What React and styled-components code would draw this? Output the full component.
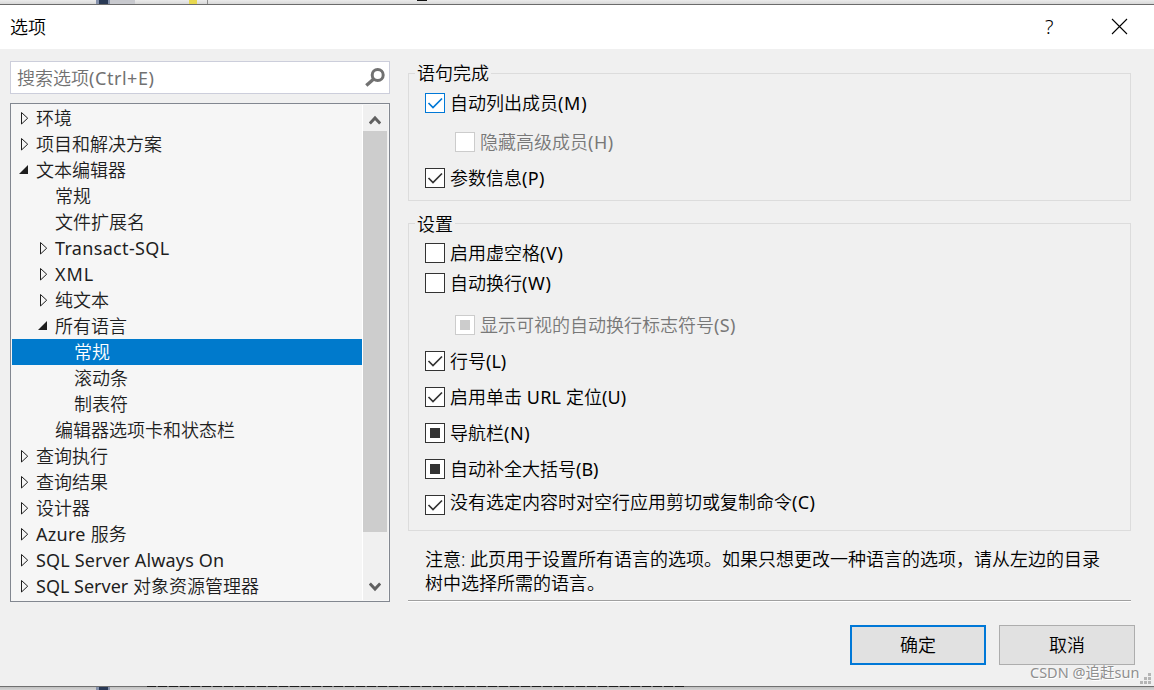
import React from "react";
import styled, { createGlobalStyle, css } from "styled-components";

const GlobalStyle = createGlobalStyle`
  * {
    box-sizing: border-box;
  }
  body {
    margin: 0;
    overflow: hidden;
    background: #e3e3e3;
    font-family: "Noto Sans", "Noto Sans CJK SC", sans-serif;
    font-size: 18px;
    font-weight: 350;
    color: #000;
  }
`;

const Screen = styled.div`
  width: 1154px;
  height: 690px;
  display: flex;
  flex-direction: column;
`;

const TopStrip = styled.div`
  height: 4px;
  display: flex;
  padding-left: 96px;
  background: linear-gradient(#ebebeb, #d8d8d8);
`;

const BottomStrip = styled.div`
  height: 3px;
  display: flex;
  padding-left: 96px;
  background: linear-gradient(#c0c0c0, #d4d4d4);
`;

const Block = styled.span`
  width: ${(p) => p.$w}px;
  height: ${(p) => (p.$h ? `${p.$h}px` : "auto")};
  margin-left: ${(p) => p.$gap || 0}px;
  background: ${(p) => p.$color};
`;

const Dashes = styled.span`
  width: 537px;
  height: 1px;
  margin: -1px 0 0 37px;
  background: repeating-linear-gradient(
    90deg,
    #1c1c1c 0 9px,
    #777 9px 11px
  );
`;

const Dialog = styled.div`
  height: 683px;
  display: flex;
  flex-direction: column;
  background: #f0f0f0;
  border-top: 1px solid #6b6b6b;
  border-bottom: 1px solid #707070;
`;

const TitleBar = styled.div`
  height: 44px;
  display: flex;
  align-items: center;
  background: #fff;
  padding: 0 26px 1px 10px;
  line-height: 24px;
  .title {
    flex: 1;
  }
  svg {
    display: block;
  }
  .help {
    width: 9px;
    margin-right: 57px;
    font-size: 20px;
  }
`;

const Content = styled.div`
  height: 553px;
  display: flex;
  gap: 18px;
  padding: 12px 23px 0 10px;
`;

const Sidebar = styled.div`
  width: 380px;
  display: flex;
  flex-direction: column;
  gap: 9px;
`;

const SearchBox = styled.div`
  height: 33px;
  display: flex;
  align-items: center;
  justify-content: space-between;
  padding: 0 3px 0 6px;
  border: 1px solid #cccedb;
  background: #fff;
  color: #717171;
  line-height: 24px;
`;

const Tree = styled.div`
  height: 499px;
  display: flex;
  padding: 1px;
  border: 1px solid #828790;
  background: #f6f6f6;
`;

const TreeList = styled.div`
  width: 350px;
`;

const TreeItem = styled.div`
  height: 26px;
  display: flex;
  align-items: center;
  padding-left: ${(p) => 6 + p.$level * 19}px;
  color: ${(p) => (p.$selected ? "#fff" : "#1e1e1e")};
  background: ${(p) => (p.$selected ? "#007acc" : "transparent")};
  line-height: 26px;
  white-space: pre;
  svg {
    width: 12px;
    height: 14px;
    margin-right: 6px;
  }
`;

const Latin = styled.span`
  font-weight: 400;
  letter-spacing: ${(p) => p.$spacing}px;
`;

const ScrollBar = styled.div`
  width: 26px;
  display: flex;
  flex-direction: column;
  align-items: center;
  background: #f0f0f0;
  border-left: 1px solid #fff;
  padding-right: 1px;
  .thumb {
    flex: none;
    width: 24px;
    height: 401px;
    margin-bottom: 42px;
    background: #cdcdcd;
  }
`;

const ScrollButton = styled.div`
  flex: none;
  height: 26px;
  display: flex;
  align-items: center;
  padding-top: ${(p) => p.$shift || 0}px;
`;

const Page = styled.div`
  width: 723px;
  display: flex;
  flex-direction: column;
  padding-top: 12px;
`;

const Group = styled.div`
  flex: none;
  height: ${(p) => p.$height}px;
  margin-bottom: ${(p) => p.$after}px;
  padding: 0 16px;
  border: 1px solid #dcdcdc;
`;

const Legend = styled.div`
  width: max-content;
  height: 24px;
  margin: -13px 0 8px -10px;
  padding: ${(p) => p.$drop || 0}px 2px 0;
  background: #f0f0f0;
  line-height: 24px;
`;

const Option = styled.div`
  height: 20px;
  display: flex;
  align-items: center;
  gap: 5px;
  margin-top: ${(p) => p.$top || 0}px;
  margin-left: ${(p) => (p.$nested ? 30 : 0)}px;
  color: ${(p) => (p.$disabled ? "#787878" : "#000")};
  line-height: 20px;
  white-space: pre;
  .label {
    padding-bottom: ${(p) => p.$lift || 0}px;
  }
`;

const Box = styled.div`
  width: 20px;
  height: 20px;
  display: flex;
  align-items: center;
  justify-content: center;
  border: 1px solid ${(p) => p.$color};
  background: #fff;
  color: ${(p) => p.$color};
  ${(p) =>
    p.$state === "mixed" &&
    css`
      &::after {
        content: "";
        width: 10px;
        height: 10px;
        background: ${p.$color};
      }
    `}
`;

const Note = styled.div`
  height: 53px;
  padding-left: 17px;
  line-height: 24px;
  white-space: nowrap;
`;

const Divider = styled.div`
  height: 2px;
  background: #fff;
  border-top: 1px solid #a0a0a0;
`;

const Footer = styled.div`
  display: flex;
  justify-content: flex-end;
  gap: 13px;
  padding: 23px 19px 0 0;
`;

const Button = styled.div`
  width: 136px;
  height: 40px;
  display: flex;
  align-items: center;
  justify-content: center;
  padding-bottom: 2px;
  background: #e1e1e1;
  border: ${(p) => (p.$primary ? "2px solid #0078d7" : "1px solid #adadad")};
`;

const Watermark = styled.div`
  position: absolute;
  left: 1030px;
  top: 662px;
  font-size: 14.5px;
  font-weight: 400;
  line-height: 20px;
  color: #8f8f8f;
  text-shadow: 1px 1px 0 #fff;
  white-space: nowrap;
`;

const Grip = styled.svg`
  position: absolute;
  left: 1140px;
  top: 673px;
`;

const tree = [
  { text: "环境", level: 0, state: "closed" },
  { text: "项目和解决方案", level: 0, state: "closed" },
  { text: "文本编辑器", level: 0, state: "open" },
  { text: "常规", level: 1 },
  { text: "文件扩展名", level: 1 },
  { text: "Transact-SQL", level: 1, state: "closed", spacing: 0.33 },
  { text: "XML", level: 1, state: "closed", spacing: 0.9 },
  { text: "纯文本", level: 1, state: "closed" },
  { text: "所有语言", level: 1, state: "open" },
  { text: "常规", level: 2, selected: true },
  { text: "滚动条", level: 2 },
  { text: "制表符", level: 2 },
  { text: "编辑器选项卡和状态栏", level: 1 },
  { text: "查询执行", level: 0, state: "closed" },
  { text: "查询结果", level: 0, state: "closed" },
  { text: "设计器", level: 0, state: "closed" },
  { text: "Azure 服务", level: 0, state: "closed", spacing: 0.3 },
  { text: "SQL Server Always On", level: 0, state: "closed", spacing: 0.17 },
  { text: "SQL Server 对象资源管理器", level: 0, state: "closed" },
];

const completion = [
  { text: "自动列出成员(M)", state: "checked", active: true, spacing: 0.7 },
  {
    text: "隐藏高级成员(H)",
    top: 19,
    nested: true,
    disabled: true,
    spacing: 0.5,
  },
  { text: "参数信息(P)", top: 16, state: "checked", spacing: 0.4 },
];

const settings = [
  { text: "启用虚空格(V)", spacing: 0.7 },
  { text: "自动换行(W)", top: 10, spacing: 0.7 },
  {
    text: "显示可视的自动换行标志符号(S)",
    top: 22,
    state: "mixed",
    nested: true,
    disabled: true,
    spacing: 0.3,
  },
  { text: "行号(L)", top: 16, state: "checked" },
  { text: "启用单击 URL 定位(U)", top: 16, state: "checked", spacing: 0.15 },
  { text: "导航栏(N)", top: 16, state: "mixed", spacing: 0.6 },
  { text: "自动补全大括号(B)", top: 16, state: "mixed" },
  {
    text: "没有选定内容时对空行应用剪切或复制命令(C)",
    top: 16,
    state: "checked",
    lift: 6,
    spacing: 0.4,
  },
];

// only the latin runs are spaced, the chinese ones keep the 18px advance
const Label = ({ text, spacing = 0 }) => (
  <span className="label">
    {text.split(/([\x20-\x7e]+)/).map((part, index) =>
      index % 2 ? (
        <Latin key={index} $spacing={spacing}>
          {part}
        </Latin>
      ) : (
        part
      )
    )}
  </span>
);

const Arrow = ({ state }) => (
  <svg viewBox="0 0 12 14">
    {state === "closed" && (
      <path d="M3.5 1.5V13L9.7 7.2Z" fill="none" stroke="#1e1e1e" />
    )}
    {state === "open" && <path d="M10 2V11H1Z" fill="#1e1e1e" />}
  </svg>
);

const Chevron = ({ down }) => (
  <svg width="12" height="10" viewBox="0 0 12 10">
    <path
      d={down ? "M0.8 1.5L6 7L11.2 1.5" : "M0.8 8.5L6 3L11.2 8.5"}
      fill="none"
      stroke="#606060"
      strokeWidth="3"
    />
  </svg>
);

const CheckOption = ({ item }) => {
  let color = "#333";
  if (item.disabled) color = "#ccc";
  if (item.active) color = "#0078d7";
  return (
    <Option
      $top={item.top}
      $nested={item.nested}
      $disabled={item.disabled}
      $lift={item.lift}
    >
      <Box $color={color} $state={item.state}>
        {item.state === "checked" && (
          <svg width="18" height="18" viewBox="0 0 18 18">
            <path
              d="M2.5 9L7 13.5L16 4.5"
              fill="none"
              stroke="currentColor"
              strokeWidth="1.7"
            />
          </svg>
        )}
      </Box>
      <Label text={item.text} spacing={item.spacing} />
    </Option>
  );
};

const App = () => {
  return (
    <Screen>
      <GlobalStyle />
      <TopStrip>
        <Block $w={3} $color="#8591ab" />
        <Block $w={9} $color="#293955" />
        <Block $w={2} $color="#8591ab" />
        <Block $w={25} $color="#c8c9ce" />
        <Block $w={8} $gap={54} $color="#e8d84f" />
        <Block $w={1} $gap={10} $color="#8c8c8c" />
        <Block $w={10} $h={1} $gap={209} $color="#111" />
      </TopStrip>
      <Dialog>
        <TitleBar>
          <span className="title">选项</span>
          <span className="help">?</span>
          <svg width="17" height="17" viewBox="0 0 17 17">
            <path d="M1 1L16 16M16 1L1 16" stroke="#000" strokeWidth="1.1" />
          </svg>
        </TitleBar>
        <Content>
          <Sidebar>
            <SearchBox>
              <Label text="搜索选项(Ctrl+E)" spacing={0.55} />
              <svg width="22" height="22" viewBox="0 0 22 22">
                <circle
                  cx="13.7"
                  cy="8"
                  r="5.5"
                  fill="none"
                  stroke="#717171"
                  strokeWidth="3"
                />
                <path d="M9.7 12L2.3 18.5" stroke="#717171" strokeWidth="3.4" />
              </svg>
            </SearchBox>
            <Tree>
              <TreeList>
                {tree.map((i, index) => (
                  <TreeItem key={index} $level={i.level} $selected={i.selected}>
                    <Arrow state={i.state} />
                    <Label text={i.text} spacing={i.spacing} />
                  </TreeItem>
                ))}
              </TreeList>
              <ScrollBar>
                <ScrollButton $shift={3}>
                  <Chevron />
                </ScrollButton>
                <div className="thumb" />
                <ScrollButton>
                  <Chevron down />
                </ScrollButton>
              </ScrollBar>
            </Tree>
          </Sidebar>
          <Page>
            <Group $height={128} $after={22}>
              <Legend>语句完成</Legend>
              {completion.map((i) => (
                <CheckOption key={i.text} item={i} />
              ))}
            </Group>
            <Group $height={308} $after={16}>
              <Legend $drop={1}>设置</Legend>
              {settings.map((i) => (
                <CheckOption key={i.text} item={i} />
              ))}
            </Group>
            <Note>
              注意: 此页用于设置所有语言的选项。如果只想更改一种语言的选项，请从左边的目录
              <br />
              树中选择所需的语言。
            </Note>
            <Divider />
          </Page>
        </Content>
        <Footer>
          <Button $primary>确定</Button>
          <Button>取消</Button>
        </Footer>
      </Dialog>
      <BottomStrip>
        <Block $w={3} $color="#8591ab" />
        <Block $w={9} $color="#293955" />
        <Block $w={2} $color="#8591ab" />
        <Dashes />
      </BottomStrip>
      <Watermark>CSDN @追赶sun</Watermark>
      <Grip width="11" height="11" viewBox="0 0 11 11" fill="#b5b5b5">
        <path d="M8 0h3v3h-3zM8 4h3v3h-3zM4 4h3v3h-3zM8 8h3v3h-3zM4 8h3v3h-3zM0 8h3v3h-3z" />
      </Grip>
    </Screen>
  );
};

export default App;
